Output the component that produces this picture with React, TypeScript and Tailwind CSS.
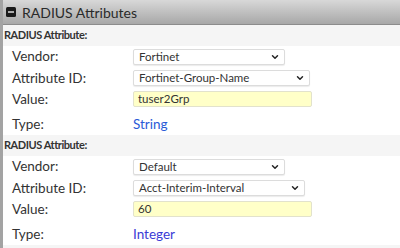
import React from 'react';
import { ChevronDown } from 'lucide-react';

interface AttrProps {
  vendor: string;
  attrId: string;
  attrWidth: string;
  value: string;
  type: string;
  typeColor: string;
}

const Select: React.FC<{ text: string; width: string }> = ({ text, width }) => (
  <div
    className={`${width} h-[16px] flex items-center justify-between bg-white border border-[#dcdcdc] rounded-[2px] pl-[5px] pr-[4px] text-[11.5px] text-[#333] shadow-[0_1px_1px_rgba(0,0,0,0.08)]`}
  >
    <span>{text}</span>
    <ChevronDown size={10} strokeWidth={3.5} className="text-[#222]" />
  </div>
);

const Row: React.FC<{ label: string; className: string; children: React.ReactNode }> = ({
  label,
  className,
  children,
}) => (
  <div className={`flex items-center ${className}`}>
    <div className="w-[130px] pl-[9px] text-[13.5px] text-[#333]">{label}</div>
    {children}
  </div>
);

const AttributeBlock: React.FC<AttrProps> = ({ vendor, attrId, attrWidth, value, type, typeColor }) => (
  <div>
    <div className="h-[21px] flex items-center bg-[#f5f5f5] pl-[1px] text-[11px] font-bold text-[#333] tracking-[-0.45px]">
      RADIUS Attribute:
    </div>
    <Row label="Vendor:" className="h-[21px]">
      <Select text={vendor} width="w-[152px]" />
    </Row>
    <Row label="Attribute ID:" className="h-[22px]">
      <Select text={attrId} width={attrWidth} />
    </Row>
    <Row label="Value:" className="h-[20px]">
      <div className="w-[179px] h-[16px] flex items-center bg-[#ffffc8] border border-[#e2e2cc] rounded-[2px] pl-[4px] text-[11.5px] text-[#333]">
        {value}
      </div>
    </Row>
    <Row label="Type:" className="h-[26px] pt-[5px]">
      <span className={`text-[13.5px] ${typeColor}`}>{type}</span>
    </Row>
  </div>
);

export default function App() {
  return (
    <div className="w-[400px] h-[248px] overflow-hidden bg-white border-l-[3px] border-[#a3a3a3] font-['Lato','Liberation_Sans',sans-serif]">
      <div className="h-[25px] flex items-center gap-[6px] pl-[3px] bg-gradient-to-b from-[#d8d8d8] to-[#a8a8a8] border-b border-[#8c8c8c]">
        <svg width="10" height="10" viewBox="0 0 10 10">
          <rect x="0" y="0" width="10" height="10" rx="1.5" fill="#1a1a1a" />
          <rect x="2" y="4.2" width="6" height="1.6" fill="#d0d0d0" />
        </svg>
        <span className="text-[14px] text-[#2a2a2a]">RADIUS Attributes</span>
      </div>
      <AttributeBlock
        vendor="Fortinet"
        attrId="Fortinet-Group-Name"
        attrWidth="w-[177px]"
        value="tuser2Grp"
        type="String"
        typeColor="text-[#2a5bd7]"
      />
      <AttributeBlock
        vendor="Default"
        attrId="Acct-Interim-Interval"
        attrWidth="w-[172px]"
        value="60"
        type="Integer"
        typeColor="text-[#3b3bd6]"
      />
      <div className="h-[10px] bg-[#f5f5f5]" />
    </div>
  );
}
